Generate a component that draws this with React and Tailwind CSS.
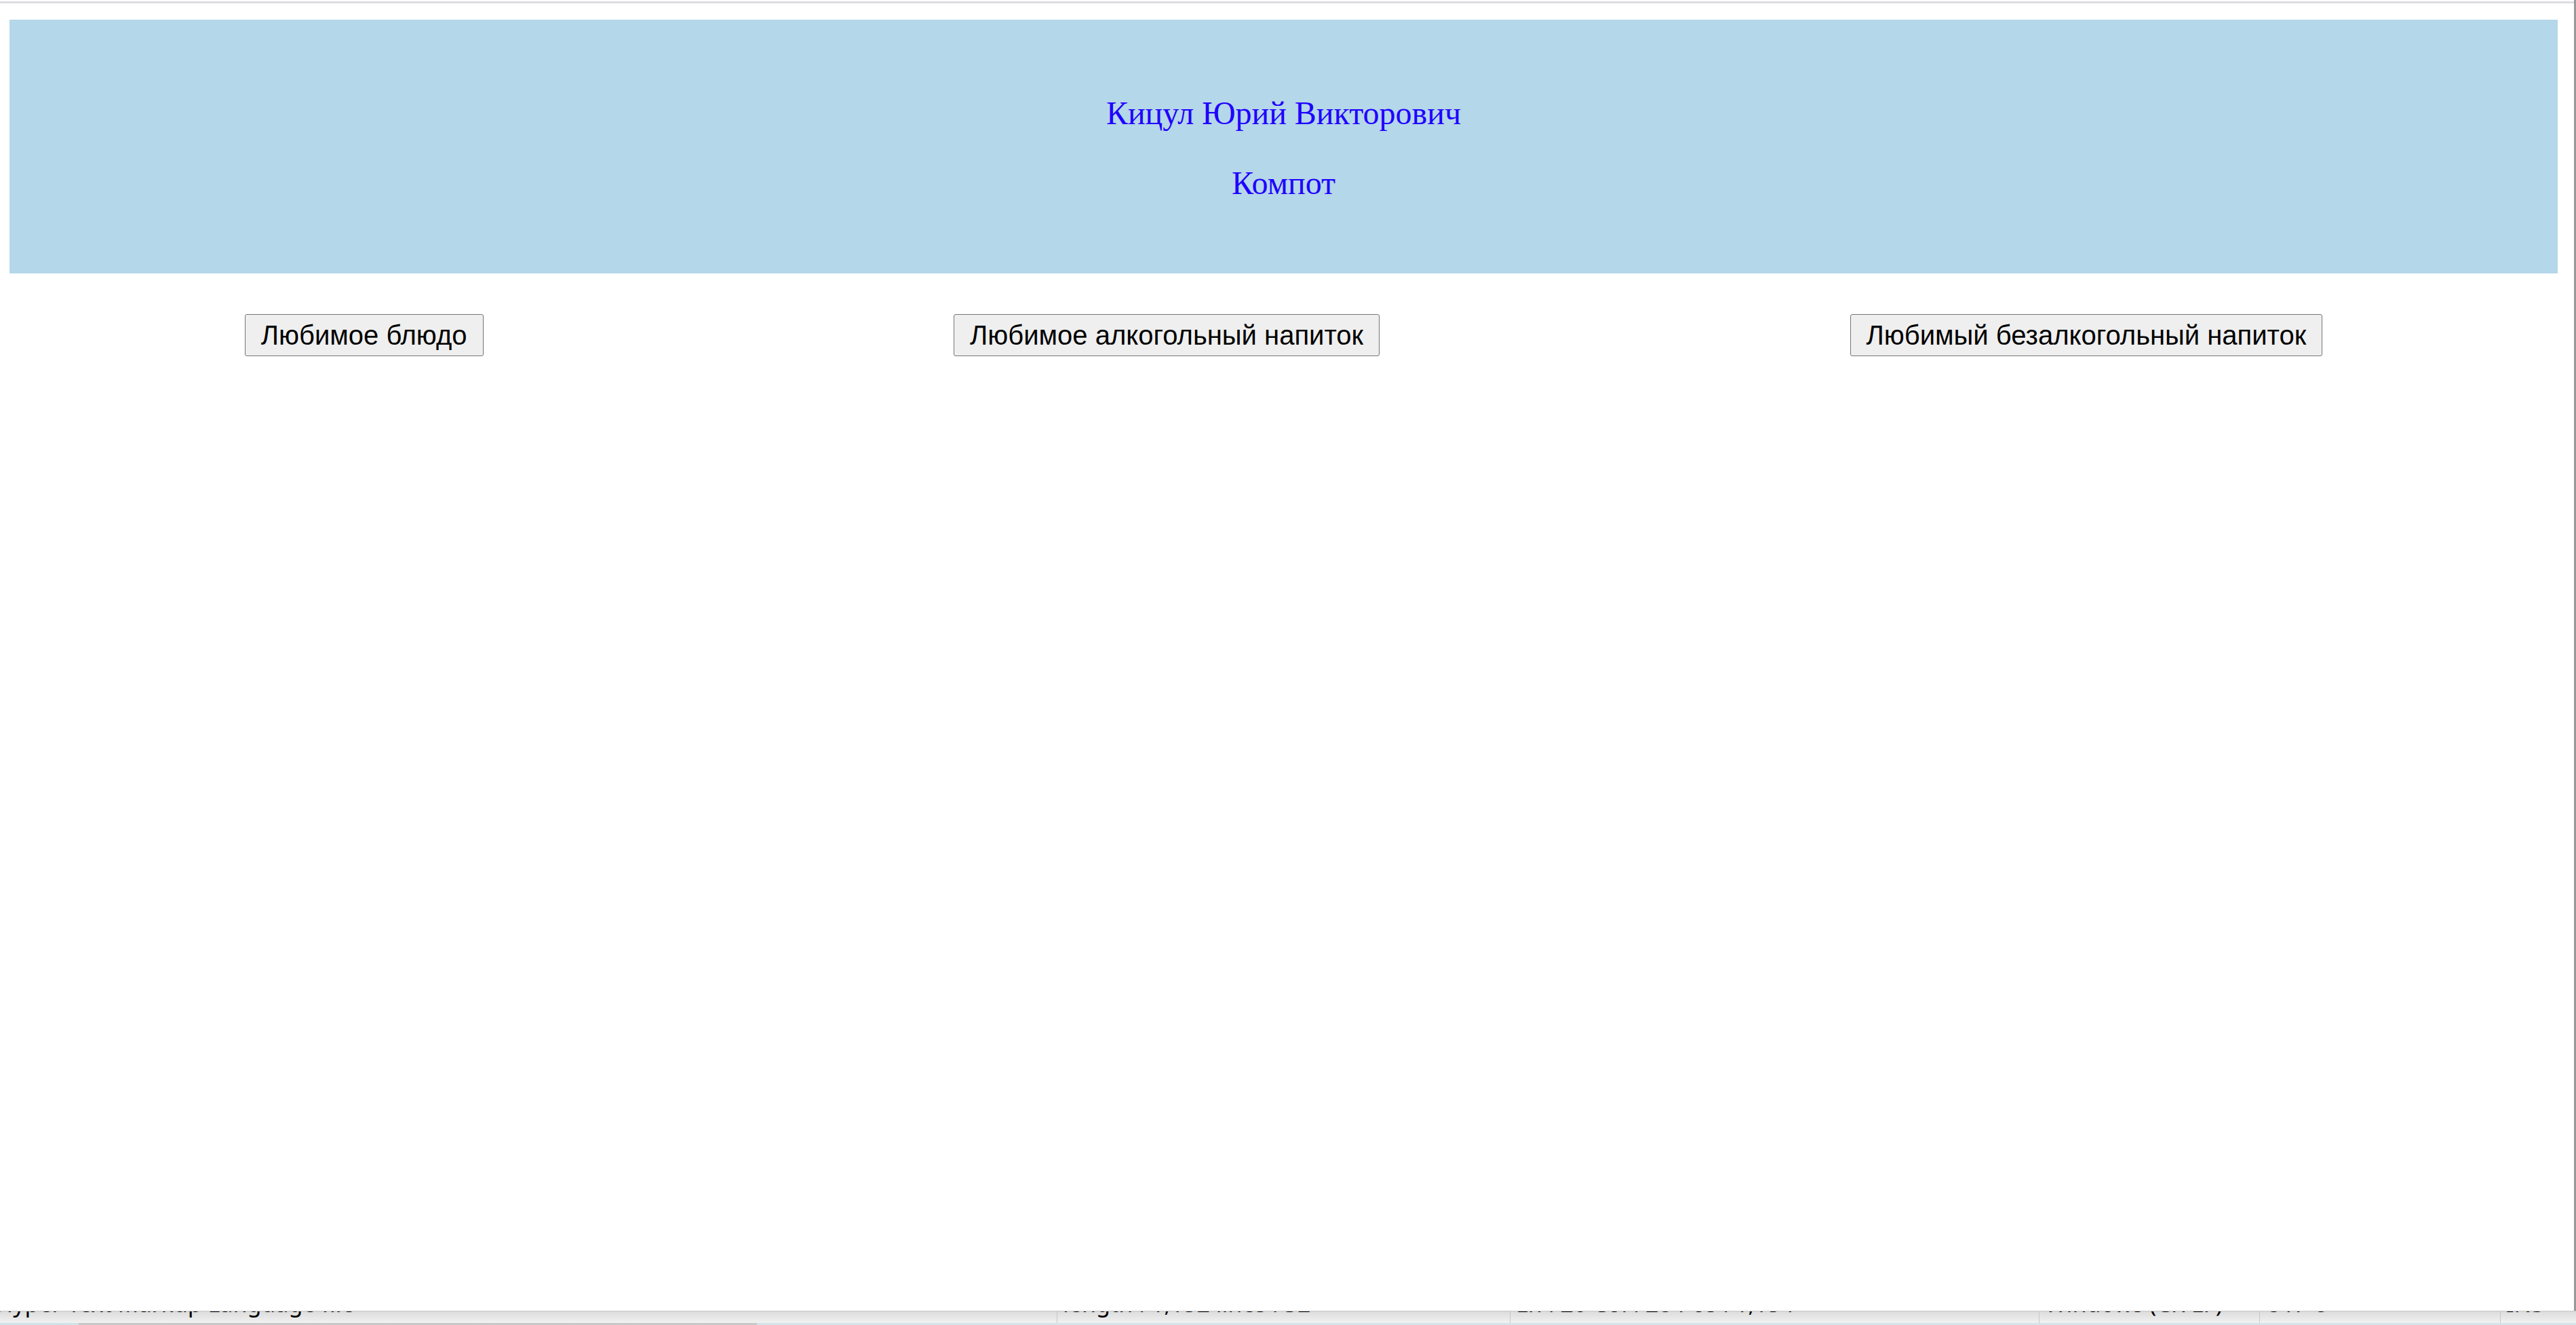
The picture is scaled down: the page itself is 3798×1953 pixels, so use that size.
const BUTTONS = ['Любимое блюдо', 'Любимое алкогольный напиток', 'Любимый безалкогольный напиток'];

const STATUS = [
  { text: 'Hyper Text Markup Language file', x: 'w-[1572px] -ml-[14px]' },
  { text: 'length : 1,152    lines : 32', x: 'w-[668px]' },
  { text: 'Ln : 20    Col : 28    Pos : 1,154', x: 'w-[780px]' },
  { text: 'Windows (CR LF)', x: 'w-[325px]' },
  { text: 'UTF-8', x: 'w-[355px]' },
  { text: 'INS', x: 'flex-1' },
];

export default function App() {
  return (
    <div className="w-[3798px] h-[1953px] bg-white overflow-hidden flex flex-col">
      {/* browser page */}
      <div className="h-[1932px] flex flex-col border-r-[3px] border-[#999999] bg-white">
        <div className="mt-[2px] h-[3px] bg-[#dcdde2]" />

        <header className="mt-[24px] ml-[14px] w-[3757px] h-[374px] bg-[#b4d7e9] flex flex-col items-center pt-[110px] font-['Liberation_Serif',serif] text-[48px] leading-[55px] text-[#1f00ff]">
          <p>Кицул Юрий Викторович</p>
          <p className="mt-[48px]">Компот</p>
        </header>

        <div className="mt-[60px] ml-[14px] w-[3757px] flex justify-around">
          {BUTTONS.map((b) => (
            <button
              key={b}
              className="h-[62px] px-[23px] flex items-center bg-[#efefef] border border-[#767676] rounded-[3px] font-['Liberation_Sans',Arial,sans-serif] text-[40px] leading-none text-black"
            >
              {b}
            </button>
          ))}
        </div>
      </div>

      {/* editor status bar peeking out below the window */}
      <div className="h-[18px] flex overflow-hidden border-t border-[#c6c6c6] bg-gradient-to-b from-[#dcdcdc] to-[#f2f2f2] font-['Noto_Sans',sans-serif] text-[34px] leading-none text-black whitespace-nowrap">
        {STATUS.map((s, i) => (
          <div key={i} className={`${s.x} shrink-0 -mt-[29px] pl-[8px] ${i > 0 ? 'border-l border-[#c8c8c8]' : ''}`}>
            {s.text}
          </div>
        ))}
      </div>
      <div className="h-[3px] flex">
        <div className="w-[116px] bg-[#cfe3e8]" />
        <div className="w-[1000px] bg-[#c8c8c8]" />
        <div className="flex-1 bg-[#d3e4e8]" />
      </div>
    </div>
  );
}
